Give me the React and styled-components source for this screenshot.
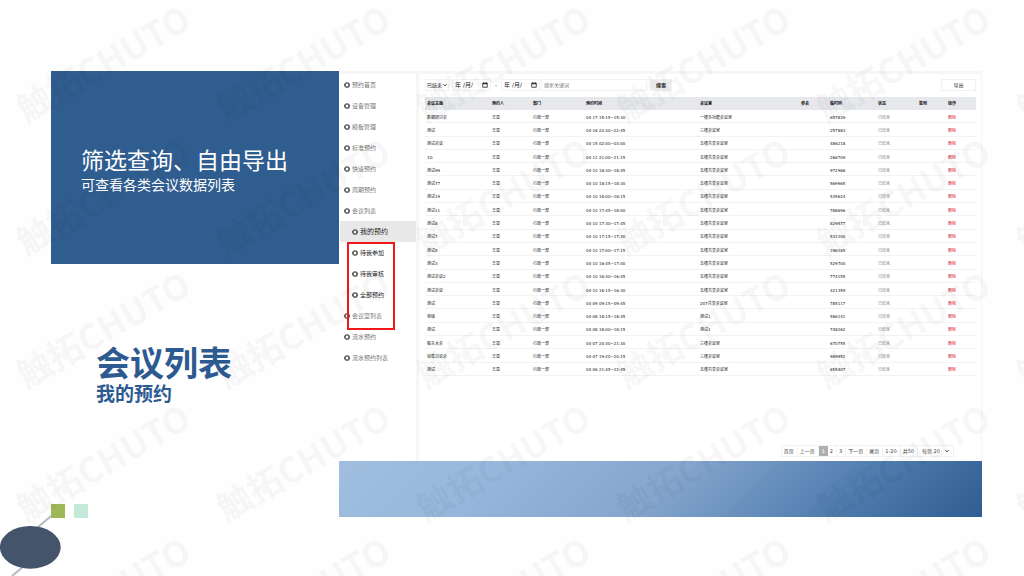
import React from "react"
import styled, { createGlobalStyle, css } from "styled-components"

const GlobalStyle = createGlobalStyle`
  * {
    box-sizing: border-box;
  }

  body {
    margin: 0;
    background: #fefefe;
    font-family: "DejaVu Sans", "Noto Sans CJK SC", sans-serif;
  }

  button, input, select {
    margin: 0;
    font-family: inherit;
  }
`

const Page = styled.main`
  position: relative;
  display: grid;
  grid-template-columns: minmax(0, 339fr) minmax(0, 643fr);
  min-height: 100vh;
  padding: 71px 42px 0 0;
  overflow: hidden;
`

const Intro = styled.aside`
  display: flex;
  flex-direction: column;
  font-family: "Noto Sans CJK SC", sans-serif;
`

const Banner = styled.section`
  display: flex;
  flex-direction: column;
  justify-content: center;
  height: 193px;
  margin-left: 51px;
  padding: 5px 30px 0;
  background: #305d8f;
  color: #fff;

  & > h2 {
    margin: 0;
    font-size: 23px;
    font-weight: 400;
    line-height: 28px;
  }

  & > p {
    margin: 0;
    font-size: 14px;
    line-height: 22px;
  }
`

const Heading = styled.header`
  margin: 79px 0 0 96px;
  color: #2d5a91;

  & > h1 {
    margin: 0;
    font-size: 34px;
    font-weight: 700;
    line-height: 38px;
  }

  & > p {
    margin: 0;
    font-size: 19px;
    font-weight: 700;
    line-height: 24px;
  }
`

const Squares = styled.div`
  display: flex;
  gap: 9px;
  margin: 99px 0 0 51px;
`

const Square = styled.span`
  width: 14px;
  height: 14px;
  background: ${props => props.$color};
`

const Ornament = styled.svg`
  display: block;
  overflow: visible;
`

const Showcase = styled.div`
  display: flex;
  flex-direction: column;
`

const Window = styled.section`
  display: flex;
  min-height: 390px;
  padding-left: 1px;
  border-top: 3px solid #f6f6f6;
  border-right: 1px solid #f6f6f6;
  background: #fff;
`

const GradientBar = styled.div`
  height: 56px;
  background: linear-gradient(135deg, #a0bfdf 0%, #97b8dc 22%, #85a6cd 50%, #4f7cae 78%, #305d92 100%);
`

const Sidebar = styled.nav`
  flex: 0 0 79px;
  border-right: 3px solid #f6f6f6;
`

const MenuList = styled.ul`
  margin: 0;
  padding: 0;
  list-style: none;
`

const MarkedGroup = styled.div`
  position: relative;

  &::after {
    content: "";
    position: absolute;
    inset: 0 21px -4px 7px;
    border: 2px solid #f01818;
  }
`

const MenuLink = styled.a`
  display: flex;
  align-items: center;
  gap: 2px;
  height: 21px;
  padding-left: 4px;
  color: #777;
  font-size: 6px;
  line-height: 8px;
  text-decoration: none;

  ${props => props.$sub && css`
    padding-left: 12px;
    color: #222;
  `}

  ${props => props.$active && css`
    background: #e8e8e8;
    font-size: 7px;
  `}
`

const Content = styled.div`
  display: flex;
  flex: 1;
  flex-direction: column;
  min-width: 0;
  padding: 5px 5px 4px 6px;
`

const Toolbar = styled.form`
  display: flex;
  align-items: center;
  height: 12px;
  margin-bottom: 6px;
  font-size: 5px;
`

const StatusSelect = styled.div`
  display: flex;
  align-items: center;
  width: 24px;
  height: 12px;
  margin-right: 3px;
  padding: 0 1px;
  border: 1px solid #f2f2f2;
  color: #222;
`

const BareSelect = styled.select`
  flex: 1;
  min-width: 0;
  height: 10px;
  padding: 0;
  border: 0;
  appearance: none;
  background: none;
  color: inherit;
  font-size: 5px;
  line-height: 10px;
`

const DateField = styled.label`
  display: flex;
  align-items: center;
  width: 39px;
  height: 12px;
  padding: 0 2px;
  border: 1px solid #f2f2f2;
`

const DateInput = styled.input`
  flex: 1;
  min-width: 0;
  padding: 0;
  border: 0;
  background: none;
  color: #222;
  font-size: 6px;
  line-height: 8px;
`

const Dash = styled.span`
  width: 10px;
  text-align: center;
`

const KeywordInput = styled.input`
  width: 106px;
  height: 12px;
  margin: 0 3px 0 1px;
  padding: 0 2px;
  border: 1px solid #f2f2f2;
  background: none;
  font-size: 5px;

  &::placeholder {
    color: #777;
    opacity: 1;
  }
`

const ToolButton = styled.button`
  width: ${props => props.$plain ? "35px" : "22px"};
  height: 12px;
  margin-left: ${props => props.$plain ? "auto" : "0"};
  padding: 0;
  border: 1px solid #f0f0f0;
  background: ${props => props.$plain ? "#fff" : "#f0f0f0"};
  color: #222;
  font-size: 5px;
  font-weight: ${props => props.$plain ? 400 : 700};
  line-height: 8px;
`

const Table = styled.table`
  width: 100%;
  height: 279px;
  table-layout: fixed;
  border-collapse: separate;
  border-spacing: 0;
  color: #111;
  font-size: 4px;
  line-height: 6px;

  th, td {
    padding: 0 0 0 2px;
    text-align: left;
    white-space: nowrap;
  }

  td {
    padding-top: 3px;
    border-bottom: 1px solid #f3f3f3;
  }

  th {
    height: 13px;
    background: #e6e8ec;
  }
`

const Col = styled.col`
  width: ${props => props.$width}px;
`

const StatusCell = styled.td`
  color: #888;
`

const DeleteLink = styled.a`
  color: #e00f1c;
  text-decoration: none;
`

const Pagination = styled.nav`
  display: flex;
  align-self: flex-end;
  height: 12px;
  margin: auto 22px 0 0;
  border: 1px solid #f2f2f2;
  color: #444;
  font-size: 5px;
  line-height: 10px;
`

const pageItem = css`
  padding: 0 3px 0 2px;
  border: 0;
  border-right: 1px solid #f2f2f2;
  background: none;
  color: inherit;
  font-size: 5px;
  line-height: 10px;
`

const PageButton = styled.button`
  ${pageItem};

  ${props => props.$current && css`
    padding: 0 3px;
    border-right: 0;
    background: #aeaeae;
    color: #fff;
  `}
`

const PageText = styled.span`
  ${pageItem};
`

const PageSize = styled.label`
  display: flex;
  align-items: center;
  width: 35px;
  padding: 0 4px;
`

const Watermark = styled.div`
  position: absolute;
  inset: -5px 0 0 2px;
  display: grid;
  grid-template-columns: repeat(6, 200px);
  grid-auto-rows: 133px;
  overflow: hidden;
  pointer-events: none;
`

const Mark = styled.span`
  display: flex;
  align-items: center;
  justify-content: center;
  color: rgba(0, 0, 0, 0.055);
  font: 700 35px/40px "Noto Sans CJK SC", sans-serif;
  white-space: nowrap;
  transform: rotate(-30deg);
`

const mainMenu = ["预约首页", "设备管理", "模板管理", "标准预约", "快速预约", "周期预约", "会议列表"]

const columns = [
  ["会议主题", 65],
  ["预约人", 41],
  ["部门", 53],
  ["预约时间", 114],
  ["会议室", 101],
  ["参会", 29],
  ["临时码", 48],
  ["状态", 41],
  ["签到", 29],
  ["操作", 30],
]

const meetings = [
  ["数据研讨会", "04-17 15:15~15:30", "一楼多功能会议室", "657839"],
  ["测试", "04-16 22:30~22:45", "三楼会议室", "257883"],
  ["测试会议", "04-15 02:00~03:00", "五楼共享会议室", "486218"],
  ["1G", "04-11 21:00~21:15", "五楼共享会议室", "266709"],
  ["测试99", "04-10 18:30~18:45", "五楼共享会议室", "972966"],
  ["测试77", "04-10 18:15~18:30", "五楼共享会议室", "569965"],
  ["测试19", "04-10 18:00~18:15", "五楼共享会议室", "535624"],
  ["测试11", "04-10 17:45~18:00", "五楼共享会议室", "788696"],
  ["测试8", "04-10 17:30~17:45", "五楼共享会议室", "829577"],
  ["测试7", "04-10 17:15~17:30", "五楼共享会议室", "531100"],
  ["测试5", "04-10 17:00~17:15", "五楼共享会议室", "196185"],
  ["测试3", "04-10 16:45~17:00", "五楼共享会议室", "529700"],
  ["测试会议2", "04-10 16:30~16:45", "五楼共享会议室", "774155"],
  ["测试会议", "04-10 16:15~16:30", "五楼共享会议室", "421359"],
  ["测试", "04-09 09:15~09:45", "207共享会议室", "785117"],
  ["审核", "04-08 18:15~18:45", "测试1", "586141"],
  ["测试", "04-08 18:00~18:15", "测试1", "748262"],
  ["股东大会", "04-07 20:30~21:30", "三楼会议室", "670755"],
  ["销售讨论会", "04-07 19:20~20:15", "三楼会议室", "989952"],
  ["测试", "04-06 21:45~22:45", "五楼共享会议室", "655407"],
]

const RingIcon = () => (
  <svg width="6" height="6" viewBox="0 0 12 12" aria-hidden="true">
    <circle cx="6" cy="6" r="4.4" fill="none" stroke="#555" strokeWidth="2.6" />
    <path d="M0 6h3M9 6h3" stroke="#555" strokeWidth="3" />
  </svg>
)

const CalendarIcon = () => (
  <svg width="6" height="6" viewBox="0 0 12 12" aria-hidden="true">
    <path d="M1.5 2.5h9v8h-9z" fill="none" stroke="#222" strokeWidth="1.6" />
    <path d="M1 3.5h10M3.5 0.5v2M8.5 0.5v2" stroke="#222" strokeWidth="2" />
  </svg>
)

const Chevron = () => (
  <svg width="4" height="4" viewBox="0 0 8 8" aria-hidden="true">
    <path d="M1 2.5l3 3 3-3" fill="none" stroke="#222" strokeWidth="2" />
  </svg>
)

function MenuItem(props) {
  return (
    <li>
      <MenuLink href="#" $sub={props.sub} $active={props.active}>
        <RingIcon />
        {props.label}
      </MenuLink>
    </li>
  )
}

function Menu() {
  return (
    <Sidebar>
      <MenuList>
        {mainMenu.map(label => <MenuItem key={label} label={label} />)}
        <MenuItem label="我的预约" sub active />
      </MenuList>
      <MarkedGroup>
        <MenuList>
          <MenuItem label="待我参加" sub />
          <MenuItem label="待我审核" sub />
          <MenuItem label="全部预约" sub />
          <MenuItem label="会议室列表" />
        </MenuList>
      </MarkedGroup>
      <MenuList>
        <MenuItem label="流水预约" />
        <MenuItem label="流水预约列表" />
      </MenuList>
    </Sidebar>
  )
}

function DateBox(props) {
  return (
    <DateField>
      <DateInput type="text" defaultValue="年 /月/" aria-label={props.label} />
      <CalendarIcon />
    </DateField>
  )
}

function Filters() {
  return (
    <Toolbar onSubmit={e => e.preventDefault()}>
      <StatusSelect>
        <BareSelect aria-label="状态">
          <option>已结束</option>
        </BareSelect>
        <Chevron />
      </StatusSelect>
      <DateBox label="开始日期" />
      <Dash>-</Dash>
      <DateBox label="结束日期" />
      <KeywordInput type="text" placeholder="搜索关键词" aria-label="搜索关键词" />
      <ToolButton type="submit">搜索</ToolButton>
      <ToolButton type="button" $plain>导出</ToolButton>
    </Toolbar>
  )
}

function MeetingTable() {
  return (
    <Table>
      <colgroup>
        {columns.map(([name, width]) => <Col key={name} $width={width} />)}
      </colgroup>
      <thead>
        <tr>{columns.map(([name]) => <th key={name}>{name}</th>)}</tr>
      </thead>
      <tbody>
        {meetings.map(([topic, time, room, code]) => (
          <tr key={code}>
            <td>{topic}</td>
            <td>王晋</td>
            <td>行政一部</td>
            <td>{time}</td>
            <td>{room}</td>
            <td />
            <td>{code}</td>
            <StatusCell>已结束</StatusCell>
            <td />
            <td><DeleteLink href="#">删除</DeleteLink></td>
          </tr>
        ))}
      </tbody>
    </Table>
  )
}

function Pager() {
  return (
    <Pagination>
      <PageButton>首页</PageButton>
      <PageButton>上一页</PageButton>
      <PageButton $current>1</PageButton>
      <PageButton>2</PageButton>
      <PageButton>3</PageButton>
      <PageButton>下一页</PageButton>
      <PageButton>尾页</PageButton>
      <PageText>1-20</PageText>
      <PageText>共50</PageText>
      <PageSize>
        <BareSelect aria-label="每页">
          <option>每页 20</option>
        </BareSelect>
        <Chevron />
      </PageSize>
    </Pagination>
  )
}

const App = () => (
  <>
    <GlobalStyle />
    <Page>
      <Intro>
        <Banner>
          <h2>筛选查询、自由导出</h2>
          <p>可查看各类会议数据列表</p>
        </Banner>
        <Heading>
          <h1>会议列表</h1>
          <p>我的预约</p>
        </Heading>
        <Squares>
          <Square $color="#9eb857" />
          <Square $color="#c5e9d9" />
        </Squares>
        <Ornament width="62" height="58" viewBox="0 0 62 58" aria-hidden="true">
          <path d="M51 -2L30 16M30 43L12 58" stroke="#b4b9c4" strokeWidth="2" />
          <ellipse cx="30.3" cy="29.3" rx="30.4" ry="21.4" fill="#44546a" />
        </Ornament>
      </Intro>
      <Showcase>
        <Window>
          <Menu />
          <Content>
            <Filters />
            <MeetingTable />
            <Pager />
          </Content>
        </Window>
        <GradientBar />
      </Showcase>
      <Watermark aria-hidden="true">
        {Array.from({ length: 30 }, (_, i) => <Mark key={i}>触拓CHUTO</Mark>)}
      </Watermark>
    </Page>
  </>
)

export default App
